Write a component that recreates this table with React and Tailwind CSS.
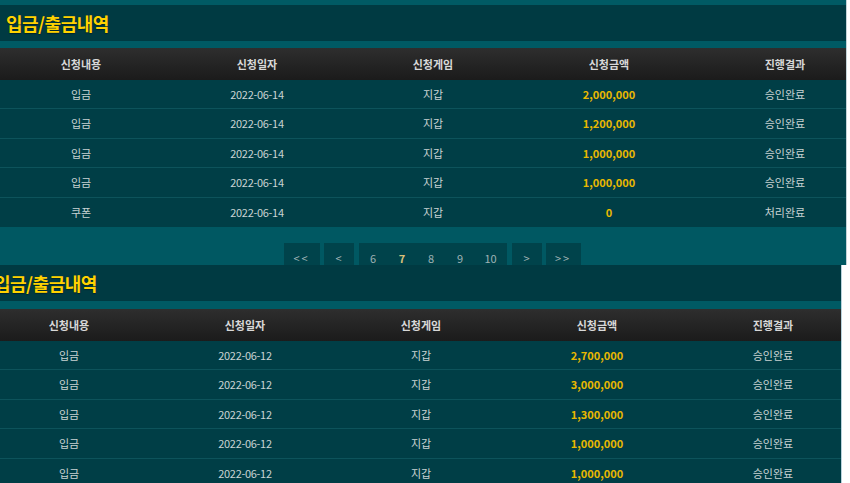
import React from 'react'

const cols = 'grid grid-cols-[176px_176px_176px_176px_176px] -ml-[7px]'

const topRows = [
  { kind: '입금', date: '2022-06-14', game: '지갑', amount: '2,000,000', result: '승인완료' },
  { kind: '입금', date: '2022-06-14', game: '지갑', amount: '1,200,000', result: '승인완료' },
  { kind: '입금', date: '2022-06-14', game: '지갑', amount: '1,000,000', result: '승인완료' },
  { kind: '입금', date: '2022-06-14', game: '지갑', amount: '1,000,000', result: '승인완료' },
  { kind: '쿠폰', date: '2022-06-14', game: '지갑', amount: '0', result: '처리완료' },
]

const bottomRows = [
  { kind: '입금', date: '2022-06-12', game: '지갑', amount: '2,700,000', result: '승인완료' },
  { kind: '입금', date: '2022-06-12', game: '지갑', amount: '3,000,000', result: '승인완료' },
  { kind: '입금', date: '2022-06-12', game: '지갑', amount: '1,300,000', result: '승인완료' },
  { kind: '입금', date: '2022-06-12', game: '지갑', amount: '1,000,000', result: '승인완료' },
  { kind: '입금', date: '2022-06-12', game: '지갑', amount: '1,000,000', result: '승인완료' },
]

const headers = ['신청내용', '신청일자', '신청게임', '신청금액', '진행결과']

function Title() {
  return (
    <div className="h-[36px] shrink-0 bg-[#003a42] flex items-center pl-[6px]">
      <h2 className="text-[18px] font-bold text-[#ffd200] tracking-[-0.5px] whitespace-nowrap [text-shadow:0_1px_1px_#00252a]">
        입금/출금내역
      </h2>
    </div>
  )
}

function Table({ rows, gap }) {
  return (
    <div className="shrink-0">
      <div className={`${gap} bg-[#005a64]`} />
      <div className={`${cols} h-[32px] bg-gradient-to-b from-[#2e2e2e] to-[#1b1b1b] items-center text-center text-[11px] font-bold text-[#d8d8d8]`}>
        {headers.map((h) => (
          <div key={h}>{h}</div>
        ))}
      </div>
      {rows.map((r, i) => (
        <div
          key={i}
          className={`${cols} h-[29.4px] items-center text-center text-[11px] text-[#c9d3d3] bg-[#003e46] ${i < rows.length - 1 ? 'border-b border-[#0d535b]' : ''}`}
        >
          <div>{r.kind}</div>
          <div className="tracking-[-0.3px]">{r.date}</div>
          <div>{r.game}</div>
          <div className="font-bold text-[#e8b800]">{r.amount}</div>
          <div>{r.result}</div>
        </div>
      ))}
    </div>
  )
}

function Pager() {
  const btn = 'h-[30px] bg-[#00434b] flex items-center justify-center text-[11px] text-[#9fb2b4]'
  return (
    <div className="bg-[#005862] flex-1 flex justify-center pt-[16px] pl-[18px]">
      <div className="flex gap-[4px]">
        <div className={`${btn} w-[36px] tracking-[2px]`}>&lt;&lt;</div>
        <div className={`${btn} w-[30px]`}>&lt;</div>
        <div className="flex">
          <div className={`${btn} w-[29px] ml-[1px]`}>6</div>
          <div className={`${btn} w-[29px] bg-[#061a1c] text-[#d9c07a] font-bold`}>7</div>
          <div className={`${btn} w-[29px]`}>8</div>
          <div className={`${btn} w-[29px]`}>9</div>
          <div className={`${btn} w-[32px]`}>10</div>
        </div>
        <div className={`${btn} w-[30px] ml-[1px]`}>&gt;</div>
        <div className={`${btn} w-[35px] tracking-[2px]`}>&gt;&gt;</div>
      </div>
    </div>
  )
}

export default function App() {
  return (
    <div
      className="w-[850px] h-[483px] overflow-hidden bg-white"
      style={{ fontFamily: '"Noto Sans CJK KR", "Noto Sans", sans-serif' }}
    >
      {/* first capture */}
      <div className="w-[847px] h-[265px] overflow-hidden border-r border-[#c4d3d8] flex flex-col bg-[#005a64]">
        <div className="h-[5px] bg-[#005a64] shrink-0" />
        <Title />
        <Table rows={topRows} gap="h-[7px]" />
        <Pager />
      </div>

      {/* second capture, shifted left */}
      <div className="w-[854px] -ml-[12px] h-[218px] overflow-hidden border-r border-[#b9d2dc] bg-[#003e46]">
        <Title />
        <Table rows={bottomRows} gap="h-[8px]" />
      </div>
    </div>
  )
}
